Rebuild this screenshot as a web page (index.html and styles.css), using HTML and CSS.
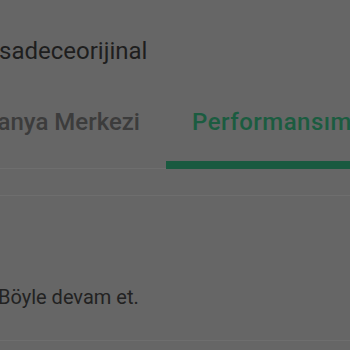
FILE: index.html
```html
<!DOCTYPE html>
<html lang="tr">
<head>
<meta charset="utf-8">
<link rel="stylesheet" href="styles.css">
</head>
<body>
<div class="screen">
  <header class="header">
    <span class="username">sadeceorijinal</span>
  </header>
  <nav class="tabs">
    <div class="tab first"><span class="tab-label">Kampanya Merkezi</span></div>
    <div class="tab active"><span class="tab-label">Performansım</span></div>
  </nav>
  <div class="section-gap"></div>
  <div class="message">
    <p class="message-text">Böyle devam et.</p>
  </div>
</div>
</body>
</html>
```
FILE: styles.css
```css
* { box-sizing: border-box; }
html, body {
  margin: 0;
  padding: 0;
  width: 350px;
  height: 350px;
  overflow: hidden;
  background: #666666;
}
.screen {
  width: 350px;
  height: 350px;
  overflow: hidden;
  font-family: Roboto, "Noto Sans", sans-serif;
}
.header {
  height: 80px;
  padding-top: 37px;
}
.username {
  display: block;
  font-size: 24px;
  line-height: 28px;
  color: #1e1e1e;
  margin-left: -1px;
}
.tabs {
  display: flex;
  align-items: flex-start;
  border-bottom: 1px solid #6e6e6e;
  white-space: nowrap;
}
.tab {
  display: flex;
  padding: 28px 26px 32px;
  font-size: 24px;
  line-height: 28px;
  font-weight: 500;
  color: #3c3c3c;
}
.tab.first {
  flex: 0 0 166px;
  width: 166px;
  min-width: 0;
  justify-content: flex-end;
}
.tab.active {
  flex: 1 0 auto;
  color: #1b5c40;
  letter-spacing: 0.5px;
  padding-bottom: 25px;
  border-bottom: 8px solid #1a5a40;
  margin-bottom: -1px;
}
.section-gap {
  height: 27px;
  border-bottom: 1px solid #6e6e6e;
}
.message {
  height: 145px;
  padding-top: 89px;
  border-bottom: 1px solid #6e6e6e;
}
.message-text {
  margin: 0 0 0 -2px;
  font-size: 20px;
  line-height: 24px;
  color: #222222;
}
```
